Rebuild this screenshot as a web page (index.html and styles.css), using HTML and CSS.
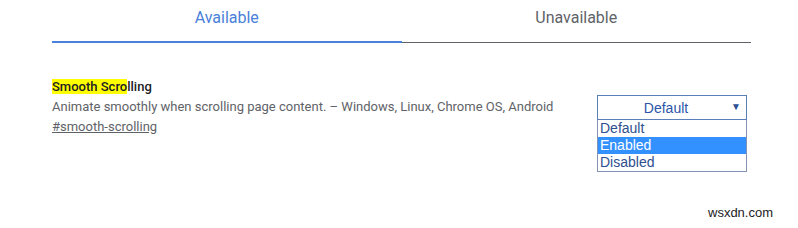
FILE: index.html
```html
<!DOCTYPE html>
<html>
<head>
<meta charset="utf-8">
<link rel="stylesheet" href="styles.css">
</head>
<body>
<div class="page">
  <div class="tabs">
    <div class="tab active">Available</div>
    <div class="tab">Unavailable</div>
  </div>
  <div class="experiment">
    <div class="info">
      <div class="title"><span class="hl">Smooth Scro</span>lling</div>
      <div class="desc">Animate smoothly when scrolling page content. – Windows, Linux, Chrome OS, Android</div>
      <a class="link">#smooth-scrolling</a>
    </div>
    <div class="control">
      <div class="select">
        <span class="value">Default</span>
        <span class="arrow">▼</span>
      </div>
      <ul class="options">
        <li>Default</li>
        <li class="selected">Enabled</li>
        <li>Disabled</li>
      </ul>
    </div>
  </div>
</div>
<div class="watermark">wsxdn.com</div>
</body>
</html>
```
FILE: styles.css
```css
html, body {
  margin: 0;
  padding: 0;
  background: #fff;
  font-family: Roboto, "Liberation Sans", sans-serif;
}
body {
  min-height: 228px;
  position: relative;
}
.page {
  padding-left: 52px;
  width: 699px;
}
.tabs {
  display: flex;
  border-bottom: 1px solid #5f6368;
  height: 42px;
}
.tab {
  flex: 1;
  text-align: center;
  font-size: 16px;
  line-height: 20px;
  padding-top: 8px;
  color: #5f6368;
  box-sizing: border-box;
  height: 43px;
}
.tab.active {
  color: #4a80d9;
  border-bottom: 2px solid #4a80d9;
}
.experiment {
  display: flex;
  justify-content: space-between;
  align-items: flex-start;
  margin-top: 34px;
  padding-right: 4px;
}
.info {
  font-size: 13px;
  line-height: 20px;
  color: #5f6368;
}
.title {
  color: #202124;
  font-weight: 500;
}
.hl {
  background: #ffff00;
}
.link {
  display: inline-block;
  color: #5f6368;
  text-decoration: underline;
}
.control {
  margin-top: 18px;
  width: 150px;
  display: flex;
  flex-direction: column;
}
.select {
  box-sizing: border-box;
  height: 25px;
  border: 1px solid #5a7fb9;
  display: flex;
  align-items: center;
  justify-content: center;
  padding-right: 12px;
  position: relative;
  font-family: "Liberation Sans", Arial, sans-serif;
  font-size: 14px;
  color: #2c55a8;
}
.arrow {
  position: absolute;
  right: 5px;
  top: 5px;
  font-size: 10px;
  color: #2c4f94;
}
.options {
  width: 150px;
  box-sizing: border-box;
  margin: 0;
  padding: 0;
  list-style: none;
  border: 1px solid #8494b3;
  border-top: none;
  background: #fff;
  font-family: "Liberation Sans", Arial, sans-serif;
  font-size: 14px;
  color: #2f4f8f;
}
.options li {
  height: 17px;
  line-height: 17px;
  padding-left: 2px;
}
.options li.selected {
  background: #3390ff;
  color: #fff;
}
.watermark {
  position: absolute;
  left: 708px;
  top: 205px;
  font-family: "Liberation Sans", Arial, sans-serif;
  font-size: 13px;
  color: #222;
}
```
